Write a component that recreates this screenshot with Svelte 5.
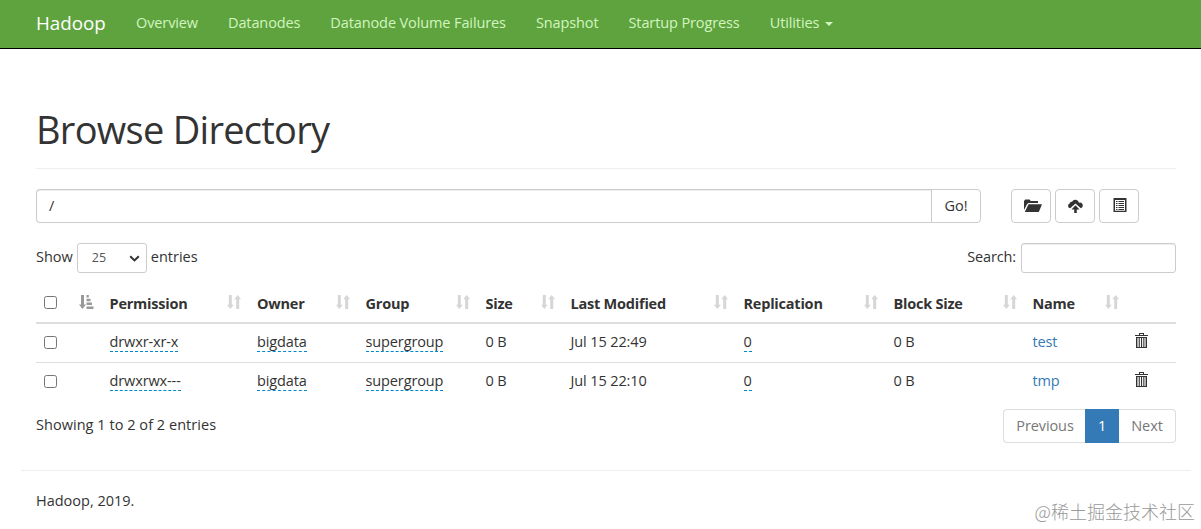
<script lang="ts">
	const navItems = ['Overview', 'Datanodes', 'Datanode Volume Failures', 'Snapshot', 'Startup Progress'];

	const columns = [
		{ key: 'permission', title: 'Permission' },
		{ key: 'owner', title: 'Owner' },
		{ key: 'group', title: 'Group' },
		{ key: 'size', title: 'Size' },
		{ key: 'modified', title: 'Last Modified' },
		{ key: 'replication', title: 'Replication' },
		{ key: 'block', title: 'Block Size' },
		{ key: 'name', title: 'Name' }
	];

	const files = [
		{ permission: 'drwxr-xr-x', owner: 'bigdata', group: 'supergroup', modified: 'Jul 15 22:49', name: 'test' },
		{ permission: 'drwxrwx---', owner: 'bigdata', group: 'supergroup', modified: 'Jul 15 22:10', name: 'tmp' }
	];

	let path = $state('/');
	let search = $state('');
</script>

<header class="navbar">
	<a class="brand" href="#top">Hadoop</a>
	<nav>
		{#each navItems as item}
			<a href="#top">{item}</a>
		{/each}
		<a href="#top">Utilities <span class="caret"></span></a>
	</nav>
</header>

<main class="container">
	<h1>Browse Directory</h1>

	<div class="toolbar">
		<div class="input-group">
			<input class="path" type="text" bind:value={path} />
			<button class="go">Go!</button>
		</div>
		<div class="actions">
			<button aria-label="Create directory">
				<svg class="folder" width="18" height="14" viewBox="0 0 18 14">
					<path d="M0 11V2l1.3-1.4h4.2L6.8 2H14v2H4.4L3 5.2z" />
					<path d="M4.5 5.2H18L14.8 13H.8z" />
				</svg>
			</button>
			<button aria-label="Upload files">
				<svg width="15" height="15" viewBox="0 0 15 15">
					<path d="M2.2 9.2A2.4 2.4 0 0 1 1.6 4.6 2.2 2.2 0 0 1 4 2.7 3.8 3.8 0 0 1 11 3.8 2.8 2.8 0 0 1 12.8 9.2L7.5 4.6z" />
					<path d="M7.5 6.2l4 4.3H8.8V14H6.2v-3.5H3.5z" />
				</svg>
			</button>
			<button aria-label="Cut">
				<svg class="list" width="14" height="14" viewBox="0 0 14 14">
					<path fill-rule="evenodd" d="M.5 0h13v14H.5zM2 2v10.7h10V2z" />
					<path d="M3 3h1.5v1H3zM5.5 3H11v1H5.5zM3 5h1.5v1H3zM5.5 5H11v1H5.5zM3 7h1.5v1H3zM5.5 7H11v1H5.5zM3 9h1.5v1H3zM5.5 9H11v1H5.5zM3 11h1.5v1H3zM5.5 11H11v1H5.5z" />
				</svg>
			</button>
		</div>
	</div>

	<div class="filters">
		<div class="length">
			Show
			<span class="select">
				25
				<svg width="11" height="7" viewBox="0 0 11 7"><path d="M1.2 1.2l4.3 4.2 4.3-4.2" /></svg>
			</span>
			entries
		</div>
		<label class="search">Search: <input type="text" bind:value={search} /></label>
	</div>

	<table>
		<colgroup>
			<col class="c-check" />
			{#each columns as col}
				<col class="c-{col.key}" />
			{/each}
			<col />
		</colgroup>
		<thead>
			<tr>
				<th>
					<div class="head">
						<input type="checkbox" />
						<svg class="sort active" width="15" height="14" viewBox="0 0 15 14">
							<path d="M2 0h3v9.5h2L3.5 14 0 9.5h2zM7.5 0h2.3v2.5H7.5zM7.5 3.8h4v2.5h-4zM7.5 7.6H13v2.5H7.5zM7.5 11.4h7v2.6h-7z" />
						</svg>
					</div>
				</th>
				{#each columns as col}
					<th>
						<div class="head">
							<span>{col.title}</span>
							<svg class="sort" width="14" height="14" viewBox="0 0 14 14">
								<path d="M1.8 0h3v9.7h2L3.3 14 0 9.7h1.8zM9.2 14h3V4.3H14L10.7 0 7.2 4.3h2z" />
							</svg>
						</div>
					</th>
				{/each}
				<th></th>
			</tr>
		</thead>
		<tbody>
			{#each files as file}
				<tr>
					<td><div class="head"><input type="checkbox" /></div></td>
					<td><span class="editable">{file.permission}</span></td>
					<td><span class="editable">{file.owner}</span></td>
					<td><span class="editable">{file.group}</span></td>
					<td>0 B</td>
					<td>{file.modified}</td>
					<td><span class="editable">0</span></td>
					<td>0 B</td>
					<td><a href="#top">{file.name}</a></td>
					<td>
						<svg class="trash" width="13" height="16" viewBox="0 0 13 16">
							<path d="M4 0h5v2h4v1H0V2h4zM5 1v1h3V1z" fill-rule="evenodd" />
							<path d="M1 4h11v1H1zM1 14h11v1H1zM1 5h1.4v9H1zM3.7 5h1.1v9H3.7zM6 5h1.1v9H6zM8.3 5h1.1v9H8.3zM10.6 5H12v9h-1.4z" />
						</svg>
					</td>
				</tr>
			{/each}
		</tbody>
	</table>

	<div class="bottom">
		<div class="info">Showing 1 to 2 of 2 entries</div>
		<div class="pagination">
			<span class="prev">Previous</span>
			<span class="current">1</span>
			<span class="next">Next</span>
		</div>
	</div>

	<footer>
		<p>Hadoop, 2019.</p>
	</footer>
</main>

<div class="watermark">@稀土掘金技术社区</div>

<style>
	:global(body) {
		overflow: hidden;
		background: #fff;
		color: #333;
		font: 14.5px/22px 'Open Sans', 'Noto Sans', sans-serif;
	}

	:global(*) {
		box-sizing: border-box;
	}

	a {
		color: #337ab7;
		text-decoration: none;
	}

	input,
	button {
		font: inherit;
		color: #333;
		margin: 0;
	}

	.navbar {
		height: 49px;
		display: flex;
		padding-left: 36px;
		background: #5fa33e;
		border-bottom: 1px solid #000;
		line-height: 46px;
	}

	.brand {
		width: 85px;
		color: #fff;
		font-size: 18.8px;
	}

	nav {
		display: flex;
		letter-spacing: -0.11px;
	}

	nav a {
		padding: 0 15px;
		color: #d2f5c0;
	}

	.caret {
		display: inline-block;
		margin-left: 2px;
		vertical-align: middle;
		border-top: 4px solid;
		border-left: 4px solid transparent;
		border-right: 4px solid transparent;
	}

	.container {
		padding: 0 25px 0 36px;
	}

	h1 {
		height: 120px;
		margin: 0 0 20px;
		padding-top: 57px;
		border-bottom: 1px solid #eee;
		font-size: 38px;
		font-weight: 400;
		line-height: 46px;
		letter-spacing: -0.72px;
	}

	.toolbar {
		display: flex;
		gap: 30px;
		height: 34px;
	}

	.input-group {
		display: flex;
		width: 945px;
	}

	.path {
		flex: 1;
		padding: 0 12px;
		border: 1px solid #ccc;
		border-right: 0;
		border-radius: 4px 0 0 4px;
		box-shadow: inset 0 1px 1px rgba(0, 0, 0, 0.075);
	}

	button {
		padding: 0;
		background: #fff;
		border: 1px solid #ccc;
		border-radius: 4px;
	}

	.go {
		width: 50px;
		border-radius: 0 4px 4px 0;
	}

	.actions {
		display: flex;
		gap: 4px;
	}

	.actions button {
		width: 40px;
		display: flex;
		align-items: center;
		justify-content: center;
	}

	.actions svg {
		fill: #333;
	}

	.folder {
		margin-left: 3px;
	}

	.list {
		margin: 0 0 2px 1px;
	}

	.filters {
		display: flex;
		justify-content: space-between;
		margin-top: 20px;
		height: 30px;
	}

	.length {
		display: flex;
		gap: 4px;
		line-height: 28px;
	}

	.select {
		display: flex;
		align-items: center;
		justify-content: space-between;
		width: 70px;
		height: 30px;
		padding: 0 6px 0 14px;
		border: 1px solid #ccc;
		border-radius: 3px;
		font-size: 12.5px;
		color: #555;
	}

	.select path {
		fill: none;
		stroke: #333;
		stroke-width: 2;
	}

	.search {
		display: flex;
		gap: 5px;
		line-height: 28px;
		letter-spacing: -0.15px;
	}

	.search input {
		width: 155px;
		height: 30px;
		border: 1px solid #ccc;
		border-radius: 3px;
		box-shadow: inset 0 1px 1px rgba(0, 0, 0, 0.075);
	}

	table {
		width: 1140px;
		margin-top: 11px;
		table-layout: fixed;
		border-collapse: separate;
		border-spacing: 0;
		letter-spacing: -0.12px;
	}

	.c-check { width: 65.5px; }
	.c-permission { width: 147.5px; }
	.c-owner { width: 108.5px; }
	.c-group { width: 120px; }
	.c-size { width: 85px; }
	.c-modified { width: 173px; }
	.c-replication { width: 150px; }
	.c-block { width: 139px; }
	.c-name { width: 102.5px; }

	th,
	td {
		height: 39px;
		padding: 0 8px;
		text-align: left;
		white-space: nowrap;
	}

	th {
		height: 40px;
		padding-top: 1px;
		border-bottom: 2px solid #ddd;
		font-weight: 700;
		letter-spacing: -0.22px;
	}

	td {
		padding-bottom: 2px;
	}

	td:last-child {
		padding-bottom: 5px;
		line-height: 0;
	}

	tbody tr:first-child td {
		height: 38px;
	}

	tbody tr + tr td {
		border-top: 1px solid #ddd;
	}

	.head {
		display: flex;
		align-items: center;
		justify-content: space-between;
	}

	th .head {
		height: 22px;
	}

	input[type='checkbox'] {
		width: 13px;
		height: 13px;
		appearance: none;
		border: 1px solid #767676;
		border-radius: 2.5px;
	}

	th input[type='checkbox'] {
		margin-top: -3px;
	}

	td input[type='checkbox'] {
		margin-top: 1px;
	}

	.sort {
		margin-top: -4px;
		fill: #d6d6d6;
	}

	.sort.active {
		fill: #999;
	}

	.editable {
		border-bottom: 1px dashed #0088cc;
	}

	.trash {
		fill: #333;
	}

	.bottom {
		display: flex;
		justify-content: space-between;
		margin-top: 8px;
		line-height: 32px;
	}

	.info {
		letter-spacing: 0.04px;
	}

	.pagination {
		display: flex;
		height: 34px;
		color: #777;
		text-align: center;
		letter-spacing: -0.1px;
	}

	.pagination span {
		border: 1px solid #ddd;
	}

	.pagination .prev {
		width: 82px;
		padding-left: 1px;
		border-right: 0;
		border-radius: 4px 0 0 4px;
	}

	.pagination .current {
		width: 34px;
		background: #337ab7;
		border-color: #337ab7;
		color: #fff;
	}

	.pagination .next {
		width: 57px;
		border-left: 0;
		border-radius: 0 4px 4px 0;
	}

	footer {
		margin: 27px -15px 0;
		padding: 19px 15px 0;
		border-top: 1px solid #eee;
	}

	footer p {
		margin: 0;
	}

	.watermark {
		position: absolute;
		right: 6px;
		bottom: 5px;
		color: #999;
		font: 300 18px/26px 'Noto Sans CJK SC', sans-serif;
	}
</style>
